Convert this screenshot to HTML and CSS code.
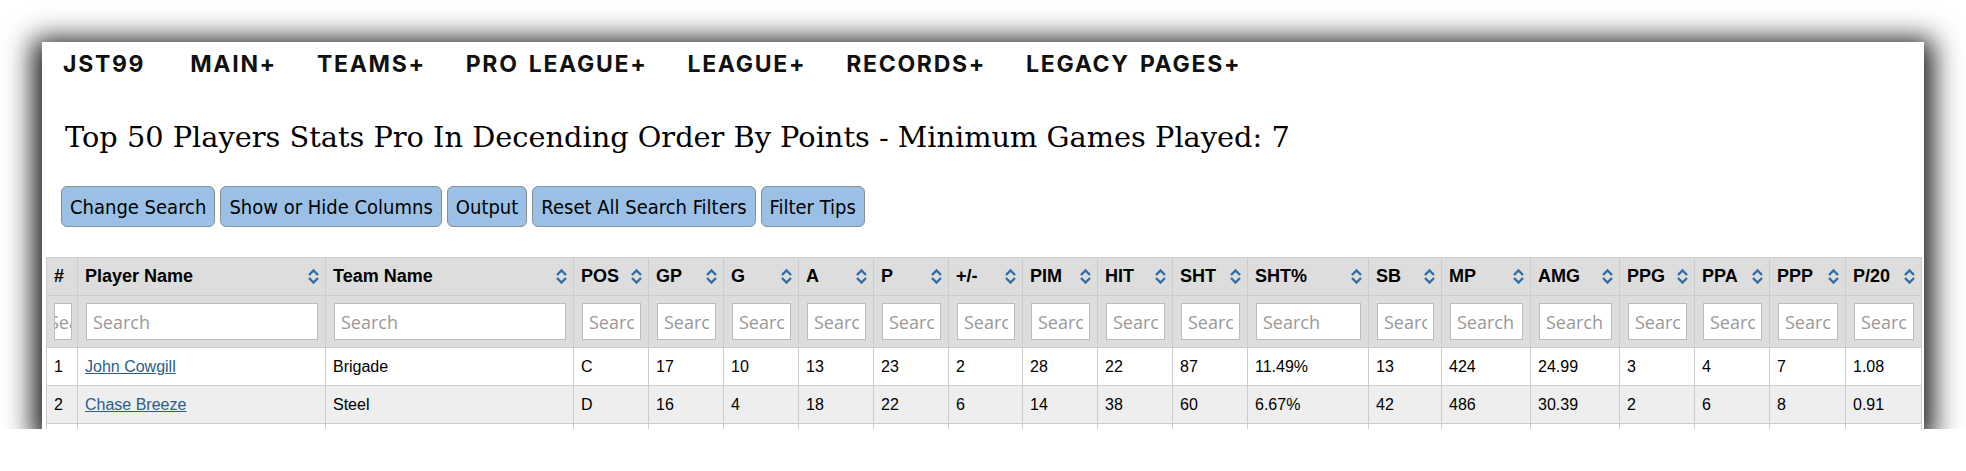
FILE: index.html
```html
<!DOCTYPE html>
<html lang="en">

<head>
  <meta charset="UTF-8">
  <meta name="viewport" content="width=device-width, initial-scale=1.0">
  <title>Top 50 Players Stats Pro</title>
  <link rel="stylesheet" href="styles.css">
</head>

<body>
  <div class="frame">
    <nav class="topnav">
      <a class="brand" href="#">JST99</a>
      <a href="#">MAIN+</a>
      <a href="#">TEAMS+</a>
      <a href="#">PRO LEAGUE+</a>
      <a href="#">LEAGUE+</a>
      <a href="#">RECORDS+</a>
      <a href="#">LEGACY PAGES+</a>
    </nav>

    <h1 class="page-title">Top 50 Players Stats Pro In Decending Order By Points - Minimum Games Played: 7</h1>

    <div class="toolbar">
      <button>Change Search</button>
      <button>Show or Hide Columns</button>
      <button>Output</button>
      <button>Reset All Search Filters</button>
      <button>Filter Tips</button>
    </div>

    <table class="stats">
      <colgroup>
        <col class="w-num">
        <col class="w-name">
        <col class="w-name">
        <col class="w-std">
        <col class="w-std">
        <col class="w-std">
        <col class="w-std">
        <col class="w-std">
        <col class="w-pm">
        <col class="w-std">
        <col class="w-std">
        <col class="w-std">
        <col class="w-pct">
        <col class="w-sb">
        <col class="w-mid">
        <col class="w-mid">
        <col class="w-std">
        <col class="w-std">
        <col class="w-p">
        <col class="w-p">
      </colgroup>
      <thead>
        <tr class="head-row" id="headRow"></tr>
        <tr class="filter-row" id="filterRow"></tr>
      </thead>
      <tbody id="statsBody"></tbody>
    </table>
  </div>

  <script>
    // Columns and rows of the stats table
    const columns = ['#', 'Player Name', 'Team Name', 'POS', 'GP', 'G', 'A', 'P', '+/-', 'PIM', 'HIT', 'SHT',
      'SHT%', 'SB', 'MP', 'AMG', 'PPG', 'PPA', 'PPP', 'P/20'];

    const players = [
      ['1', 'John Cowgill', 'Brigade', 'C', '17', '10', '13', '23', '2', '28', '22', '87', '11.49%', '13', '424', '24.99', '3', '4', '7', '1.08'],
      ['2', 'Chase Breeze', 'Steel', 'D', '16', '4', '18', '22', '6', '14', '38', '60', '6.67%', '42', '486', '30.39', '2', '6', '8', '0.91'],
      ['3', '', '', '', '', '', '', '', '', '', '', '', '', '', '', '', '', '', '', '']
    ];

    const sortIcon = `<svg class="sort-icon" width="13" height="17" viewBox="0 0 13 17">
        <polyline points="2,7 6.5,2.5 11,7" />
        <polyline points="2,10 6.5,14.5 11,10" />
      </svg>`;

    const headRow = document.getElementById('headRow');
    const filterRow = document.getElementById('filterRow');

    columns.forEach((name, i) => {
      const th = document.createElement('th');
      th.innerHTML = `<div class="th-inner"><span>${name}</span>${i === 0 ? '' : sortIcon}</div>`;
      headRow.appendChild(th);

      const fd = document.createElement('td');
      fd.innerHTML = '<input type="text" class="filter" placeholder="Search">';
      filterRow.appendChild(fd);
    });

    const body = document.getElementById('statsBody');
    players.forEach(row => {
      const tr = document.createElement('tr');
      row.forEach((value, i) => {
        const td = document.createElement('td');
        if (i === 1 && value) {
          td.innerHTML = `<a href="#">${value}</a>`;
        } else {
          td.textContent = value;
        }
        tr.appendChild(td);
      });
      body.appendChild(tr);
    });
  </script>
</body>

</html>
```

FILE: styles.css
```css
body {
  margin: 0;
  background: #ffffff;
}

.frame {
  width: 1882px;
  height: 387px;
  margin: 42px 0 0 42px;
  background: #ffffff;
  overflow: hidden;
  box-shadow: 0 6px 26px 9px rgba(0, 0, 0, 0.9);
}

.topnav {
  height: 44px;
  display: flex;
  align-items: center;
  gap: 40px;
  padding-left: 21px;
}

.topnav a {
  font-family: Inter, "Open Sans", sans-serif;
  font-weight: 700;
  font-size: 23px;
  color: #111111;
  text-decoration: none;
  letter-spacing: 1.7px;
  word-spacing: 3px;
}

.topnav .brand {
  margin-right: 5px;
}

.page-title {
  margin: 33px 0 0 23px;
  font-family: "DejaVu Serif", "Liberation Serif", serif;
  font-weight: normal;
  font-size: 28.8px;
  line-height: 36px;
  color: #000000;
}

.toolbar {
  display: flex;
  gap: 5px;
  margin: 31px 0 0 19px;
}

.toolbar button {
  height: 41px;
  padding: 0 8px;
  font-family: "DejaVu Sans Condensed", "DejaVu Sans", sans-serif;
  font-size: 20px;
  color: #000000;
  background-color: #9bc0e6;
  border: 1px solid #8a8f96;
  border-radius: 6px;
}

.stats {
  width: 1875px;
  margin: 30px 0 0 4px;
  table-layout: fixed;
  border-collapse: collapse;
  font-family: "Liberation Sans", Arial, sans-serif;
}

.w-num { width: 31px; }
.w-name { width: 248px; }
.w-std { width: 75px; }
.w-pm { width: 74px; }
.w-pct { width: 121px; }
.w-sb { width: 73px; }
.w-mid { width: 89px; }
.w-p { width: 76px; }

.stats th,
.stats td {
  border: 1px solid #cccccc;
  text-align: left;
  white-space: nowrap;
  overflow: hidden;
}

.head-row th {
  height: 37px;
  padding: 0 5px 0 7px;
  background: #dddddd;
  font-size: 18px;
  font-weight: bold;
  color: #000000;
}

.th-inner {
  display: flex;
  justify-content: space-between;
  align-items: center;
}

.sort-icon {
  flex-shrink: 0;
  fill: none;
  stroke: #2f6fa8;
  stroke-width: 2.4;
}

.filter-row td {
  height: 51px;
  padding: 0 7px 0 8px;
  background: #dddddd;
}

.filter-row td:first-child {
  padding: 0 5px 0 7px;
}

.filter {
  box-sizing: border-box;
  width: 100%;
  height: 37px;
  padding: 0 6px;
  font-family: "Open Sans", sans-serif;
  font-size: 18px;
  border: 1px solid #bbbbbb;
  border-radius: 0;
  background: #ffffff;
  outline: none;
}

.filter-row td:first-child .filter {
  padding: 0;
  text-indent: -6px;
}

.filter::placeholder {
  color: #999999;
}

.stats tbody td {
  height: 37px;
  padding: 0 7px;
  font-size: 16px;
  color: #000000;
}

.stats tbody tr:nth-child(even) td {
  background: #eeeeee;
}

.stats tbody a {
  color: #2c5d88;
}
```
